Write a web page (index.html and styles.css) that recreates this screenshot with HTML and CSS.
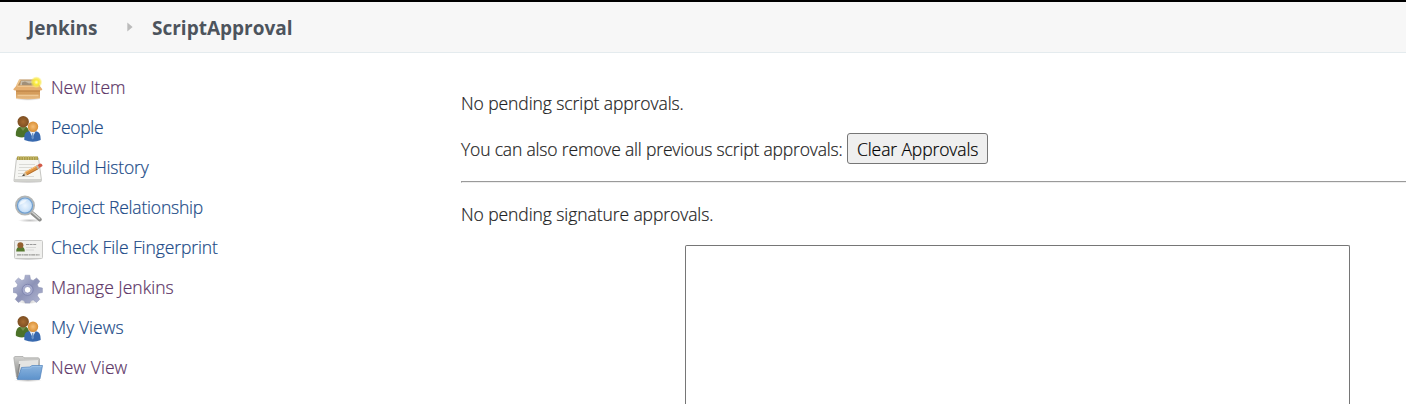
FILE: index.html
```html
<!DOCTYPE html>
<html lang="en">
<head>
<meta charset="utf-8">
<title>ScriptApproval [Jenkins]</title>
<link rel="stylesheet" href="styles.css">
</head>
<body>
<svg class="defs" aria-hidden="true">
  <defs>
    <linearGradient id="card" x2="0" y2="1"><stop stop-color="#edbd82"/><stop offset=".5" stop-color="#d39a58"/><stop offset="1" stop-color="#e9bd85"/></linearGradient>
    <radialGradient id="glow"><stop stop-color="#fffbd0"/><stop offset=".4" stop-color="#fbec38"/><stop offset=".7" stop-color="#f8e850" stop-opacity=".75"/><stop offset="1" stop-color="#fff36a" stop-opacity="0"/></radialGradient>
    <radialGradient id="lens"><stop stop-color="#edf6ff"/><stop offset=".6" stop-color="#cde3f9"/><stop offset="1" stop-color="#a9cdf2"/></radialGradient>
    <linearGradient id="gear" x2="1" y2="1"><stop stop-color="#c3c8df"/><stop offset=".5" stop-color="#8d93b7"/><stop offset="1" stop-color="#b1b6d2"/></linearGradient>
    <linearGradient id="folder" x2="0" y2="1"><stop stop-color="#8ab4df"/><stop offset="1" stop-color="#5d92cb"/></linearGradient>
    <linearGradient id="grey" x2="0" y2="1"><stop stop-color="#d2d2d0"/><stop offset="1" stop-color="#868784"/></linearGradient>
    <radialGradient id="skin"><stop stop-color="#f5bf78"/><stop offset="1" stop-color="#d98f35"/></radialGradient>
    <radialGradient id="brown"><stop stop-color="#a66b31"/><stop offset="1" stop-color="#7c4e22"/></radialGradient>
    <radialGradient id="shade"><stop stop-color="#777" stop-opacity=".45"/><stop offset="1" stop-color="#777" stop-opacity="0"/></radialGradient>
    <symbol id="people" viewBox="0 0 30 30">
      <path d="M2.800 21.500Q2.500 13 8 12.500H12Q16.500 13 16.500 22L9 23.500Q4 23 2.800 21.500Z" fill="#4c7229"/>
      <path d="M7 13l3 4 3-4z" fill="#75904e"/>
      <circle cx="10.200" cy="7.800" r="5.700" fill="url(#brown)"/>
      <path d="M11.300 26Q10.300 18 16 17.300H23Q28 18 27.700 26Q20 29.500 11.300 26Z" fill="#3869ae"/>
      <path d="M16.500 17.300h6.200l-3.200 6z" fill="#e8eff8"/><path d="M19.200 19h1l.8 5-1.300 1.500-1.300-1.500z" fill="#6b94c7"/>
      <circle cx="20" cy="12.700" r="5.200" fill="url(#skin)"/>
    </symbol>
  </defs>
</svg>
<header class="breadcrumbs">
  <a class="crumb crumb-home">Jenkins</a>
  <svg class="crumb-arrow" viewBox="0 0 6 10"><path d="M.3.500 5.600 5 .3 9.500z"/></svg>
  <a class="crumb crumb-page">ScriptApproval</a>
</header>
<div class="page">
  <nav class="tasks">
    <a class="task visited"><svg class="icon" viewBox="0 0 30 30"><ellipse cx="15" cy="24.800" rx="13" ry="2" fill="url(#shade)"/><path d="M3.500 12 6.500 5.500H23L27 12z" fill="#b98d58"/><path d="M8 6.500h13.500l1.500 5H7z" fill="#c9bda8"/><path d="M9 8.500l3-1 4 2 5-1v3H9z" fill="#a08f78"/><path d="M3 13H27V24.500Q15 26 3 24.500Z" fill="url(#card)"/><path d="M3 15H27V17.500H3z" fill="#b2763a"/><path d="M3.500 11.500H26.500L29.300 15.300Q29.300 16.400 28 16.500H2Q.2 16.400.3 15.300z" fill="#e6b071"/><path d="M4.500 12.300h21" stroke="#f3cc98"/><path d="M6 5.500 3 11.500 4.500 12 8 6z" fill="#edc58e"/><path d="M4.500 21.500h21" stroke="#efc894" stroke-width="1.500"/><circle cx="23.400" cy="8.200" r="6" fill="url(#glow)"/></svg><span class="t-new-item">New Item</span></a>
    <a class="task"><svg class="icon"><use href="#people"/></svg><span class="t-people">People</span></a>
    <a class="task"><svg class="icon" viewBox="0 0 30 30"><ellipse cx="15" cy="27.500" rx="14" ry="2" fill="url(#shade)"/><path d="M3.500 4H25.500L28.500 26.500Q28.500 27.700 27 27.700H2Q.8 27.700 1 26.500z" fill="#f6f6f3" stroke="#c6c6c2"/><path d="M1.500 26h26.500" stroke="#aeafaa"/><path d="M4 2.500H25V6H4z" fill="#aa9b49"/><path d="M5.500 2v4m2.500-4v4m2.500-4v4M13 2v4m2.500-4v4M18 2v4m2.500-4v4M23 2v4" stroke="#cfc477" stroke-width=".8"/><path d="M6 10.500h16M6 13.500h13M5 16.500h9M5 19.500h6M5 22.500h16" stroke="#dadad6"/><path d="M10 21.500 12.200 17.700 24.500 10.900 26.500 14.400 14 21.300z" fill="#df9340"/><path d="M12.500 18.300 24.600 11.600" stroke="#f7c27a"/><path d="M14 20.800 26 14.200" stroke="#a8672d" stroke-width=".8"/><path d="M10 21.500 12.200 17.900 14 21z" fill="#d8c4a0"/><path d="M8.800 22.300 11 20l1 1.500z" fill="#333"/><path d="M24.400 10.900 27 9.600q2.500 0 2.500 2.500L26.500 14z" fill="#d25b48"/><path d="m23.500 11.400 1.900 3.500" stroke="#bbb" stroke-width="1.400"/></svg><span class="t-history">Build History</span></a>
    <a class="task"><svg class="icon" viewBox="0 0 30 30"><ellipse cx="17" cy="26.500" rx="12" ry="1.800" fill="url(#shade)"/><path d="m18.500 18.500 8.300 7" stroke="#8d8e8c" stroke-width="4" stroke-linecap="round"/><path d="m19.500 18.500 7 6" stroke="#d1d2d0" stroke-width="1.500" stroke-linecap="round"/><circle cx="12" cy="11.600" r="9" fill="url(#lens)" stroke="#b4b6b5" stroke-width="2"/><circle cx="12" cy="11.600" r="7.600" fill="none" stroke="#719fce" stroke-width="1.200"/><path d="M6.500 10Q8 5 14 6.200 11 10 6.500 11z" fill="#fff" opacity=".6"/></svg><span class="t-relation">Project Relationship</span></a>
    <a class="task"><svg class="icon" viewBox="0 0 30 30"><ellipse cx="15" cy="25" rx="15" ry="1.500" fill="url(#shade)"/><rect x="1.500" y="6.500" width="28" height="18" rx="1" fill="#f0f0ee" stroke="#c8c8c6"/><path d="M3.200 17.500q0-5 4.300-5t4.300 5z" fill="#55792e"/><circle cx="7.400" cy="11.200" r="3" fill="#93602f"/><path d="M13 10.500h10.500" stroke="#999" stroke-width="1.200" stroke-dasharray="3 .6"/><path d="M13 13.500h10M13 16h8" stroke="#d8d8d6"/><path d="M4 20.800h22.500" stroke="#999997" stroke-width="1.200" stroke-dasharray="4 .6 2 .5"/></svg><span class="t-finger">Check File Fingerprint</span></a>
    <a class="task visited"><svg class="icon" viewBox="0 0 30 30"><ellipse cx="15" cy="28" rx="10" ry="2" fill="url(#shade)"/><g fill="url(#gear)" stroke="#8b90b0" stroke-width=".5"><path d="M12.200 1.200h4.600l.7 4.200 2.600 1.100 3.500-2.500 3.200 3.200-2.500 3.500 1.100 2.600 4 .7v4.500l-4 .7-1.100 2.600 2.500 3.500-3.200 3.200-3.500-2.500-2.600 1.100-.7 2h-4.600l-.7-2-2.600-1.100-3.500 2.500-3.200-3.200 2.500-3.500-1.100-2.600-3.400-.7V14l3.400-.7 1.100-2.600L2.200 7.200 5.400 4l3.500 2.500 2.600-1.100z"/></g><circle cx="14.600" cy="15.800" r="5.500" fill="#a7acce" stroke="#777da8" stroke-width=".8"/><circle cx="14.600" cy="15.800" r="3.300" fill="#fff" stroke="#777da8" stroke-width=".6"/></svg><span class="t-manage">Manage Jenkins</span></a>
    <a class="task"><svg class="icon"><use href="#people"/></svg><span class="t-my">My Views</span></a>
    <a class="task visited"><svg class="icon" viewBox="0 0 30 30"><ellipse cx="15" cy="26.500" rx="14" ry="1.500" fill="url(#shade)"/><path d="M.8 3.500 2 2.500h8l1 1.300H25.500L26.500 5v18H3.500z" fill="url(#grey)" stroke="#a3a4a2" stroke-width=".7"/><path d="M6 7 25 6V18L5 23z" fill="#e4e4e2"/><path d="m4.300 25 2.200-15" stroke="#888" stroke-width="1.500"/><path d="M8.500 13.500 17 13 19 11.500H29.500L27 24.700Q26.700 25.500 26 25.500H4.500z" fill="url(#folder)" stroke="#4d80ba" stroke-width=".7"/><path d="m9.200 14.300 8-.3 2-1.600h9.500" fill="none" stroke="#a5c8ec" stroke-width=".7"/></svg><span class="t-view">New View</span></a>
  </nav>
  <main class="content">
    <p class="message m-script">No pending script approvals.</p>
    <div class="clear-row"><span class="m-clear">You can also remove all previous script approvals:</span><button class="clear-button" type="button"><span class="m-button">Clear Approvals</span></button></div>
    <hr class="divider">
    <p class="message m-sign">No pending signature approvals.</p>
    <div class="signatures"></div>
  </main>
</div>
</body>
</html>
```
FILE: styles.css
```css
* { box-sizing: border-box; }
body {
  margin: 0;
  height: 404px;
  overflow: hidden;
  background: #fff;
  color: #222;
  font: 300 17.5px/24px "Open Sans", "Noto Sans", sans-serif;
}
.defs { position: absolute; width: 0; height: 0; }
.breadcrumbs {
  display: flex;
  align-items: center;
  height: 53px;
  padding-left: 27px;
  border-top: 2px solid #000;
  border-bottom: 1px solid #e4ebee;
  background: #f7f7f7;
  color: #4d545d;
  font-size: 19px;
  font-weight: 700;
}
.crumb { padding-top: 1px; white-space: nowrap; }
.crumb-home { width: 100px; padding-left: 1px; }
.crumb-arrow { width: 6px; height: 10px; margin-right: 19px; fill: #bbb; }
.page { display: flex; height: 351px; -webkit-text-stroke: .2px; }
.tasks { width: 461px; flex: none; padding: 15px 0 0 13px; }
.task {
  display: flex;
  align-items: center;
  height: 40px;
  color: #204a87;
  white-space: nowrap;
}
.task span { margin-top: -2px; }
.visited { color: #5c3566; }
.icon { width: 30px; height: 30px; margin: 2px 8px 0 0; flex: none; }
.content { flex: 1; padding-top: 38px; white-space: nowrap; }
.message { margin: 0; }
.clear-row { display: flex; align-items: center; height: 31px; margin-top: 18px; }
.m-clear { width: 386px; letter-spacing: -.17px; }
.clear-button {
  height: 31px;
  width: 141px;
  padding: 1px 0 0 9px;
  text-align: left;
  border: 1px solid #767676;
  border-radius: 3px;
  background: #efefef;
  color: #000;
  font: inherit;
}
.divider { margin: 17px 0 19px; border: 1px inset #eee; border-right: 0; }
.signatures {
  width: 665px;
  height: 159px;
  margin: 19px 0 0 224px;
  border: 1px solid #767676;
  border-bottom: 0;
  border-radius: 2px 2px 0 0;
}
.m-script, .m-sign { letter-spacing: -.08px; }
.m-button, .t-finger { letter-spacing: -.1px; }
.t-new-item { letter-spacing: -.05px; }
.t-people { letter-spacing: -.3px; }
.t-history { letter-spacing: -.17px; }
.t-relation { letter-spacing: -.2px; }
.t-manage { letter-spacing: .02px; }
.t-my, .t-view { letter-spacing: .07px; }
```
